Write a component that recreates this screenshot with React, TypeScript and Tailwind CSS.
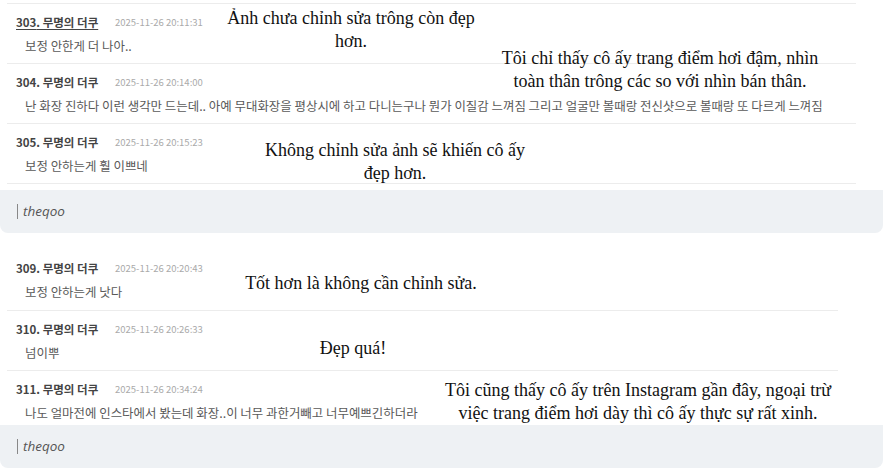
import React from 'react';

type Comment = {
  no: number;
  time: string;
  body: string;
  hover?: boolean;
};

const firstCard: Comment[] = [
  { no: 303, time: '2025-11-26 20:11:31', body: '보정 안한게 더 나아..', hover: true },
  {
    no: 304,
    time: '2025-11-26 20:14:00',
    body: '난 화장 진하다 이런 생각만 드는데.. 아예 무대화장을 평상시에 하고 다니는구나 뭔가 이질감 느껴짐 그리고 얼굴만 볼때랑 전신샷으로 볼때랑 또 다르게 느껴짐',
  },
  { no: 305, time: '2025-11-26 20:15:23', body: '보정 안하는게 훨 이쁘네' },
];

const secondCard: Comment[] = [
  { no: 309, time: '2025-11-26 20:20:43', body: '보정 안하는게 낫다' },
  { no: 310, time: '2025-11-26 20:26:33', body: '넘이뿌' },
  { no: 311, time: '2025-11-26 20:34:24', body: '나도 얼마전에 인스타에서 봤는데 화장..이 너무 과한거빼고 너무예쁘긴하더라' },
];

function CommentRow({ c, border }: { c: Comment; border: boolean }) {
  return (
    <div className={`h-[60px] pt-[11px] ${border ? 'border-t border-[#ececec]' : ''}`}>
      <div className="flex items-center h-[14px] pl-[9px]">
        <span
          className={`w-[99px] shrink-0 text-[11.5px] font-bold text-[#444] leading-[14px] ${c.hover ? 'underline underline-offset-2' : ''}`}
        >
          {c.no}. 무명의 더쿠
        </span>
        <span className="text-[9.5px] text-[#aaa] leading-[14px]">{c.time}</span>
      </div>
      <div className="mt-[10px] pl-[18px] text-[12.45px] text-[#595959] leading-[14px] whitespace-nowrap">
        {c.body}
      </div>
    </div>
  );
}

function Source() {
  return (
    <div className="h-[43px] w-[883px] bg-[#eef1f4] rounded-b-lg flex items-center pl-[17px]">
      <span className="border-l border-[#888] pl-[5px] italic text-[13.5px] leading-[15px] text-[#555] font-['Open_Sans',sans-serif]">
        theqoo
      </span>
    </div>
  );
}

function Caption({ left, top, children }: { left: number; top: number; children: React.ReactNode }) {
  return (
    <div
      className="absolute w-[460px] text-center text-[18px] leading-[23px] text-[#111] whitespace-nowrap font-['Liberation_Serif','Times_New_Roman',serif]"
      style={{ left: left - 230, top }}
    >
      {children}
    </div>
  );
}

export default function App() {
  return (
    <div className="relative w-[891px] h-[468px] overflow-hidden bg-white font-['Noto_Sans_CJK_KR','Noto_Sans',sans-serif]">
      {/* first embed */}
      <div className="w-[883px]">
        <div className="pt-[3px] pl-[7px] w-[856px]">
          {firstCard.map((c) => (
            <CommentRow key={c.no} c={c} border />
          ))}
          <div className="border-t border-[#ececec]" />
        </div>
        <div className="mt-[6px]">
          <Source />
        </div>
      </div>

      {/* second embed */}
      <div className="w-[883px] mt-[17px]">
        <div className="pl-[7px] w-[838px]">
          {secondCard.map((c, i) => (
            <CommentRow key={c.no} c={c} border={i > 0} />
          ))}
        </div>
        <div className="-mt-[5px]">
          <Source />
        </div>
      </div>

      {/* translations laid over the screenshot */}
      <Caption left={351} top={7}>
        Ảnh chưa chỉnh sửa trông còn đẹp
        <br />
        hơn.
      </Caption>
      <Caption left={660} top={47}>
        Tôi chỉ thấy cô ấy trang điểm hơi đậm, nhìn
        <br />
        toàn thân trông các so với nhìn bán thân.
      </Caption>
      <Caption left={395} top={139}>
        Không chỉnh sửa ảnh sẽ khiến cô ấy
        <br />
        đẹp hơn.
      </Caption>
      <Caption left={361} top={272}>
        Tốt hơn là không cần chỉnh sửa.
      </Caption>
      <Caption left={353} top={337}>
        Đẹp quá!
      </Caption>
      <Caption left={638} top={379}>
        Tôi cũng thấy cô ấy trên Instagram gần đây, ngoại trừ
        <br />
        việc trang điểm hơi dày thì cô ấy thực sự rất xinh.
      </Caption>
    </div>
  );
}
